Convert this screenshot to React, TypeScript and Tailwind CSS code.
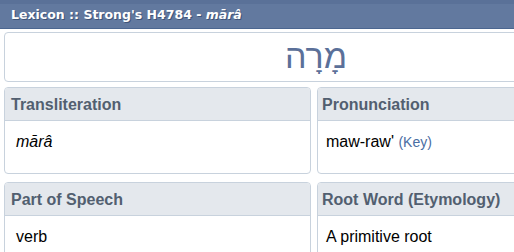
import React from "react";

function Card({ label, children, left }: { label: string; children: React.ReactNode; left?: boolean }) {
  return (
    <div className="w-[307px] shrink-0 rounded-[4px] border border-[#c8d2dd] overflow-hidden bg-white">
      <div
        className={`h-[33px] pt-[2px] bg-[#e4e8ed] border-b border-[#c8d2dd] flex items-center font-bold text-[16px] text-[#525f70] ${left ? "pl-[6px]" : "pl-[4px]"}`}
      >
        {label}
      </div>
      <div className={`h-[52px] pt-[11px] text-[16px] leading-[20px] text-black ${left ? "pl-[11px]" : "pl-[8px]"}`}>
        {children}
      </div>
    </div>
  );
}

export default function App() {
  return (
    <div className="w-[514px] h-[252px] overflow-hidden bg-white" style={{ fontFamily: '"Liberation Sans", Arial, sans-serif' }}>
      <div className="w-[632px]">
        <div className="h-[29px] bg-[#62799f] border-t-[4px] border-[#5a7198] border-b border-b-[#4b6690] flex items-center pl-[11px]">
          <span
            className="text-white font-bold text-[12.5px] leading-none pb-[1px] [text-shadow:1px_1px_0_#3f5478]"
            style={{ fontFamily: '"DejaVu Sans", Verdana, sans-serif' }}
          >
            Lexicon :: Strong's H4784 - <i>mārâ</i>
          </span>
        </div>
        <div className="px-[4px] pt-[3px]">
          <div className="h-[50px] rounded-[4px] border border-[#c8d2dd] flex items-center justify-center">
            <span className="text-[34px] leading-none text-[#5b7099] pb-[2px]" dir="rtl" style={{ fontFamily: '"Liberation Sans", "DejaVu Sans", sans-serif' }}>
              מָרָה
            </span>
          </div>
          <div className="flex gap-[6px] mt-[5px]">
            <Card label="Transliteration" left>
              <i>mārâ</i>
            </Card>
            <Card label="Pronunciation">
              maw-raw' <span className="text-[14px] text-[#4a6ea3]">(Key)</span>
            </Card>
          </div>
          <div className="flex gap-[6px] mt-[8px]">
            <Card label="Part of Speech" left>
              verb
            </Card>
            <Card label="Root Word (Etymology)">A primitive root</Card>
          </div>
        </div>
      </div>
    </div>
  );
}
